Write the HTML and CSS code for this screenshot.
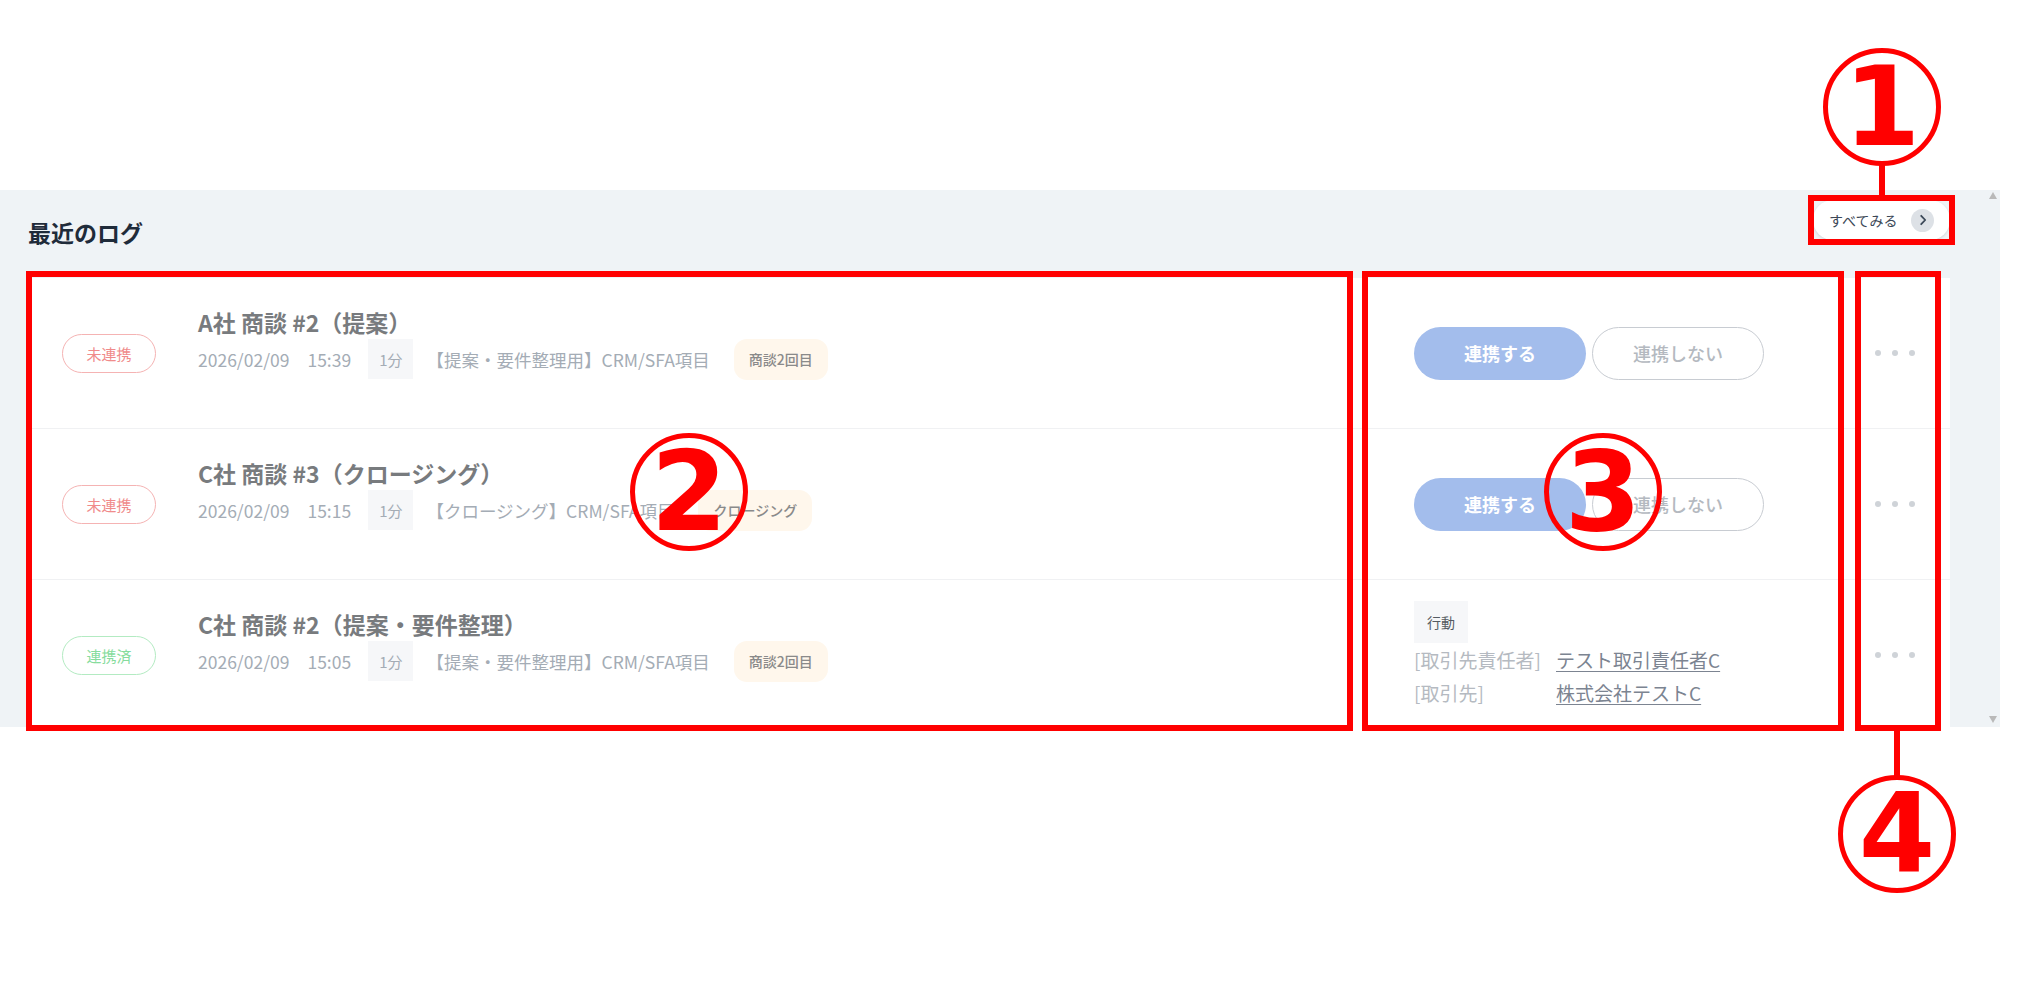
FILE: index.html
```html
<!DOCTYPE html>
<html lang="ja">
  <head>
    <meta charset="UTF-8" />
    <meta name="viewport" content="width=device-width, initial-scale=1.0" />
    <title>最近のログ</title>
    <link rel="stylesheet" href="styles.css">
  </head>
  <body>
    <div class="screen">
      <section class="panel">
        <div class="panel-body">
          <header class="panel-header">
            <h2 class="panel-title">最近のログ</h2>
            <a class="see-all" href="#">
              <span>すべてみる</span>
              <span class="chev">
                <svg width="10" height="12" viewBox="0 0 10 12"><path d="M3.2 1.8 L7.2 6 L3.2 10.2" fill="none" stroke="#3a4757" stroke-width="1.8" stroke-linecap="round" stroke-linejoin="round"/></svg>
              </span>
            </a>
          </header>

          <div class="log-card">
            <div class="log-row">
              <div class="log-main">
                <span class="status status-pending">未連携</span>
                <div class="log-text">
                  <div class="log-title">A社 商談 #2（提案）</div>
                  <div class="log-meta">
                    <span class="meta-date">2026/02/09</span>
                    <span class="meta-time">15:39</span>
                    <span class="duration">1分</span>
                    <span class="meta-form">【提案・要件整理用】CRM/SFA項目</span>
                    <span class="tag">商談2回目</span>
                  </div>
                </div>
              </div>
              <div class="log-actions">
                <button class="btn btn-primary">連携する</button>
                <button class="btn btn-secondary">連携しない</button>
              </div>
              <div class="log-more"><span></span><span></span><span></span></div>
            </div>

            <div class="log-row">
              <div class="log-main">
                <span class="status status-pending">未連携</span>
                <div class="log-text">
                  <div class="log-title">C社 商談 #3（クロージング）</div>
                  <div class="log-meta">
                    <span class="meta-date">2026/02/09</span>
                    <span class="meta-time">15:15</span>
                    <span class="duration">1分</span>
                    <span class="meta-form">【クロージング】CRM/SFA項目</span>
                    <span class="tag">クロージング</span>
                  </div>
                </div>
              </div>
              <div class="log-actions">
                <button class="btn btn-primary">連携する</button>
                <button class="btn btn-secondary">連携しない</button>
              </div>
              <div class="log-more"><span></span><span></span><span></span></div>
            </div>

            <div class="log-row">
              <div class="log-main">
                <span class="status status-done">連携済</span>
                <div class="log-text">
                  <div class="log-title">C社 商談 #2（提案・要件整理）</div>
                  <div class="log-meta">
                    <span class="meta-date">2026/02/09</span>
                    <span class="meta-time">15:05</span>
                    <span class="duration">1分</span>
                    <span class="meta-form">【提案・要件整理用】CRM/SFA項目</span>
                    <span class="tag">商談2回目</span>
                  </div>
                </div>
              </div>
              <div class="log-actions">
                <div class="linked">
                  <span class="linked-type">行動</span>
                  <div class="linked-line">
                    <span class="linked-label">[取引先責任者]</span>
                    <a class="linked-value" href="#">テスト取引責任者C</a>
                  </div>
                  <div class="linked-line">
                    <span class="linked-label">[取引先]</span>
                    <a class="linked-value" href="#">株式会社テストC</a>
                  </div>
                </div>
              </div>
              <div class="log-more"><span></span><span></span><span></span></div>
            </div>
          </div>
        </div>

        <div class="scrollbar">
          <span class="scroll-up"></span>
          <span class="scroll-down"></span>
        </div>
      </section>

      <!-- red callouts drawn over the screenshot -->
      <div class="callouts">
        <div class="mark mark-1"></div>
        <div class="mark mark-2"></div>
        <div class="mark mark-3"></div>
        <div class="mark mark-4"></div>
        <div class="stem stem-1"></div>
        <div class="stem stem-4"></div>
        <div class="num num-1">1</div>
        <div class="num num-2">2</div>
        <div class="num num-3">3</div>
        <div class="num num-4">4</div>
      </div>
    </div>
  </body>
</html>
```

FILE: styles.css
```css
body {
  margin: 0;
  font-family: "Noto Sans CJK JP", "Noto Sans", sans-serif;
  background-color: #fff;
  color: #202124;
}

.screen {
  position: relative;
  width: 2036px;
  height: 991px;
  overflow: hidden;
}

.panel {
  margin-top: 190px;
  width: 2000px;
  height: 537px;
  background-color: #eff3f6;
  display: flex;
  overflow: hidden;
}

.panel-body {
  flex: 1;
  min-width: 0;
  padding: 0 35px 0 28px;
}

.panel-header {
  display: flex;
  justify-content: space-between;
  align-items: flex-start;
  height: 88px;
}

.panel-title {
  margin: 26px 0 0;
  font-size: 23px;
  line-height: 32px;
  font-weight: 700;
  color: #1f2b3a;
}

.see-all {
  margin-top: 10px;
  height: 40px;
  width: 137px;
  box-sizing: border-box;
  padding: 0 16px 0 16px;
  display: flex;
  align-items: center;
  justify-content: space-between;
  background-color: #fff;
  border-radius: 20px;
  box-shadow: 0 1px 3px rgba(0, 0, 0, 0.12);
  font-size: 14px;
  color: #3b4756;
  text-decoration: none;
}

.chev {
  width: 23px;
  height: 23px;
  border-radius: 50%;
  background-color: #dde1e6;
  display: flex;
  align-items: center;
  justify-content: center;
}

.log-card {
  background-color: #fff;
}

.log-row {
  display: flex;
  align-items: center;
  height: 150px;
  border-bottom: 1px solid #f0f1f3;
}

.log-main {
  flex: 1;
  display: flex;
  align-items: center;
  padding-left: 34px;
}

.status {
  width: 94px;
  height: 39px;
  box-sizing: border-box;
  border: 1.5px solid;
  border-radius: 20px;
  display: flex;
  align-items: center;
  justify-content: center;
  font-size: 15px;
  margin-right: 42px;
}

.status-pending {
  color: #f08a8a;
  border-color: #f5b3b3;
}

.status-done {
  color: #86dc9d;
  border-color: #b3ebc2;
}

.log-text {
  padding-bottom: 20px;
}

.log-title {
  font-size: 23px;
  line-height: 30px;
  font-weight: 700;
  color: #787b7e;
  margin-bottom: 2px;
}

.log-meta {
  display: flex;
  align-items: center;
  font-size: 17.5px;
  color: #a4acb5;
  height: 40px;
}

.meta-date { margin-right: 18px; }
.meta-time { margin-right: 17px; }
.meta-form { margin-left: 13px; margin-right: 24px; }

.duration {
  height: 40px;
  padding: 0 11px;
  display: flex;
  align-items: center;
  background-color: #f6f7f9;
  font-size: 15px;
}

.tag {
  height: 41px;
  padding: 0 15px;
  display: flex;
  align-items: center;
  background-color: #fff7ec;
  border-radius: 13px;
  font-size: 14px;
  font-weight: 500;
  color: #8a8a8a;
}

.log-actions {
  width: 426px;
  display: flex;
  gap: 6px;
}

.btn {
  width: 172px;
  height: 53px;
  box-sizing: border-box;
  border-radius: 27px;
  font-family: inherit;
  font-size: 18px;
  cursor: pointer;
}

.btn-primary {
  background-color: #a3bdec;
  color: #fff;
  border: none;
  font-weight: 700;
}

.btn-secondary {
  background-color: #fff;
  color: #b4b9c0;
  border: 1.5px solid #c8ccd2;
  font-weight: 500;
}

.linked {
  display: flex;
  flex-direction: column;
  align-items: flex-start;
}

.linked-type {
  height: 42px;
  padding: 0 13px;
  display: flex;
  align-items: center;
  background-color: #f6f7f9;
  font-size: 14px;
  color: #555b62;
}

.linked-line {
  display: flex;
  font-size: 19px;
  line-height: 33px;
}

.linked-label {
  width: 142px;
  color: #b5bac1;
}

.linked-value {
  color: #7c8491;
  text-decoration: underline;
  text-underline-offset: 3px;
}

.log-more {
  width: 110px;
  display: flex;
  justify-content: center;
  gap: 11px;
}

.log-more span {
  width: 6px;
  height: 6px;
  border-radius: 50%;
  background-color: #cfd3d8;
}

.scrollbar {
  flex: none;
  width: 15px;
  display: flex;
  flex-direction: column;
  justify-content: space-between;
  align-items: center;
  padding: 2px 0 4px;
  box-sizing: border-box;
}

.scroll-up,
.scroll-down {
  width: 0;
  height: 0;
  border-left: 4px solid transparent;
  border-right: 4px solid transparent;
}

.scroll-up {
  border-bottom: 7px solid #b9b9b9;
}

.scroll-down {
  border-top: 7px solid #b9b9b9;
}

/* callout overlay */
.callouts .mark,
.callouts .stem,
.callouts .num {
  position: absolute;
  box-sizing: border-box;
}

.mark {
  border: 6px solid #ff0000;
}

.mark-1 { left: 1808px; top: 195px; width: 147px; height: 50px; }
.mark-2 { left: 26px; top: 271px; width: 1327px; height: 460px; }
.mark-3 { left: 1362px; top: 271px; width: 482px; height: 460px; }
.mark-4 { left: 1855px; top: 271px; width: 86px; height: 460px; }

.stem {
  width: 6px;
  background-color: #ff0000;
}

.stem-1 { left: 1879px; top: 164px; height: 32px; }
.stem-4 { left: 1894px; top: 730px; height: 46px; }

.num {
  width: 118px;
  height: 118px;
  border: 5px solid #ff0000;
  border-radius: 50%;
  display: flex;
  align-items: center;
  justify-content: center;
  font-family: "DejaVu Sans", sans-serif;
  font-weight: 700;
  font-size: 110px;
  line-height: 1;
  color: #ff0000;
}

.num-1 { left: 1823px; top: 48px; }
.num-2 { left: 630px; top: 433px; }
.num-3 { left: 1544px; top: 433px; }
.num-4 { left: 1838px; top: 775px; }
```
